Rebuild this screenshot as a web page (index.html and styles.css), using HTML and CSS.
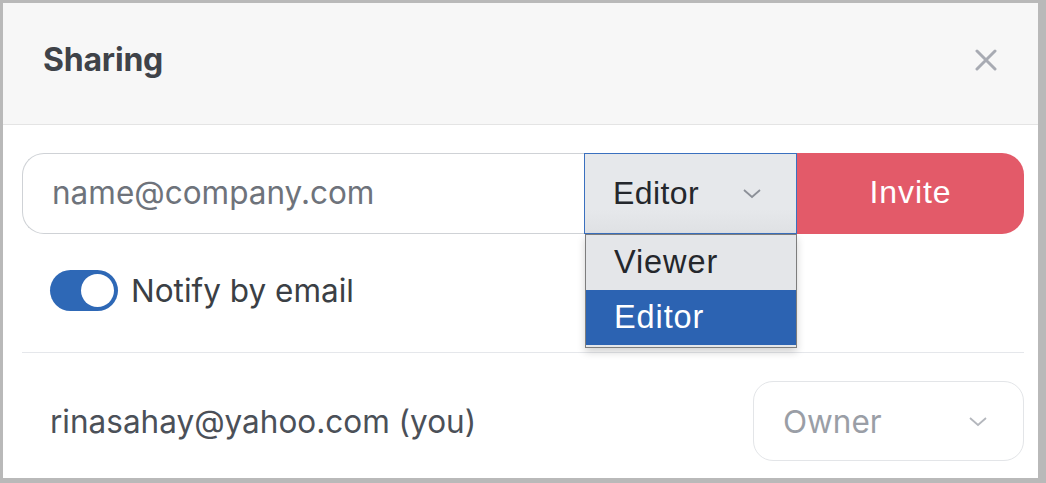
FILE: index.html
```html
<!DOCTYPE html>
<html>
<head>
<meta charset="utf-8">
<link rel="stylesheet" href="styles.css">
</head>
<body>
<div class="panel">
  <header class="header">
    <h1 class="title">Sharing</h1>
    <svg class="close" width="22" height="22" viewBox="0 0 22 22"><path d="M2 2 L20 20 M20 2 L2 20" stroke="#a8abb3" stroke-width="3" stroke-linecap="round" fill="none"/></svg>
  </header>
  <div class="body">
    <div class="invite-row">
      <div class="email-input">name@company.com</div>
      <div class="role-wrap">
        <div class="role-select">
          <span>Editor</span>
          <svg class="chev" width="20" height="11" viewBox="0 0 20 11"><path d="M2 2 L10 9 L18 2" stroke="#8c9098" stroke-width="1.8" fill="none"/></svg>
        </div>
        <ul class="role-list">
          <li class="opt">Viewer</li>
          <li class="opt selected">Editor</li>
        </ul>
      </div>
      <button class="invite-btn">Invite</button>
    </div>
    <div class="notify-row">
      <span class="toggle"><span class="knob"></span></span>
      <span class="notify-label">Notify by email</span>
    </div>
    <div class="divider"></div>
    <div class="member-row">
      <span class="member">rinasahay@yahoo.com (you)</span>
      <div class="owner-select">
        <span>Owner</span>
        <svg class="chev" width="20" height="11" viewBox="0 0 20 11"><path d="M2 2 L10 9 L18 2" stroke="#b4b7bd" stroke-width="1.8" fill="none"/></svg>
      </div>
    </div>
  </div>
</div>
</body>
</html>
```
FILE: styles.css
```css
* { box-sizing: border-box; }
html, body { margin: 0; padding: 0; }
body {
  background: #b9b9b9;
  width: 1046px;
  height: 483px;
  overflow: hidden;
  padding: 3px 8px 5px 3px;
  font-family: Inter, "Noto Sans", sans-serif;
}
.panel {
  background: #fff;
  width: 1035px;
  height: 475px;
  overflow: hidden;
}
.header {
  height: 122px;
  background: #f7f7f7;
  border-bottom: 1px solid #e4e4e4;
  display: flex;
  align-items: center;
  justify-content: space-between;
  padding: 0 41px 8px 40px;
}
.title {
  margin: 0;
  font-size: 32px;
  font-weight: 700;
  color: #3f4349;
  letter-spacing: -0.2px;
}
.close { display: block; }
.body {
  padding: 28px 14px 0 19px;
}
.invite-row {
  display: flex;
  height: 81px;
}
.email-input {
  width: 562px;
  height: 81px;
  border: 1px solid #cfd2d6;
  border-right: none;
  border-radius: 22px 0 0 22px;
  display: flex;
  align-items: center;
  padding: 0 0 2px 29px;
  font-size: 31.5px;
  color: #6e737b;
}
.role-wrap {
  position: relative;
  width: 213px;
}
.role-select {
  height: 81px;
  background: linear-gradient(#e6e8eb 70%, #dfe1e4);
  border: 1px solid #3a70bf;
  display: flex;
  align-items: center;
  justify-content: space-between;
  padding: 0 34px 0 28px;
  font-family: "Liberation Sans", Arial, sans-serif;
  font-size: 32px;
  letter-spacing: 0.4px;
  color: #24272c;
}
.role-list {
  position: absolute;
  top: 81px;
  left: 1px;
  width: 212px;
  margin: 0;
  padding: 0 0 2px;
  list-style: none;
  background: #e4e6e9;
  border: 1px solid #7d7d7d;
  box-shadow: 0 4px 8px rgba(0,0,0,0.18);
  font-family: "Liberation Sans", Arial, sans-serif;
  font-size: 32.5px;
  letter-spacing: 0.9px;
  z-index: 2;
}
.opt {
  height: 55px;
  display: flex;
  align-items: center;
  padding-left: 28px;
  color: #24272c;
}
.opt.selected {
  background: #2c63b2;
  color: #fff;
}
.invite-btn {
  width: 227px;
  height: 81px;
  border: none;
  border-radius: 0 22px 22px 0;
  background: #e35a69;
  color: #fff;
  font-family: "Liberation Sans", Arial, sans-serif;
  font-size: 32px;
  letter-spacing: 0.9px;
  padding: 0 0 2px;
  margin: 0;
}
.notify-row {
  display: flex;
  align-items: center;
  gap: 13px;
  height: 41px;
  margin-top: 36px;
  padding-left: 28px;
}
.toggle {
  width: 68px;
  height: 41px;
  border-radius: 21px;
  background: #2e68b6;
  display: flex;
  align-items: center;
  justify-content: flex-end;
  padding-right: 4px;
}
.knob {
  width: 33px;
  height: 33px;
  border-radius: 50%;
  background: #fff;
}
.notify-label {
  font-size: 31.5px;
  color: #3b3f45;
}
.divider {
  height: 1px;
  background: #e5e7eb;
  margin-top: 41px;
}
.member-row {
  display: flex;
  align-items: center;
  justify-content: space-between;
  margin-top: 28px;
  padding-left: 28px;
}
.member {
  font-size: 31.5px;
  color: #4b5058;
}
.owner-select {
  width: 271px;
  height: 80px;
  border: 1px solid #e3e5e8;
  border-radius: 20px;
  display: flex;
  align-items: center;
  justify-content: space-between;
  padding: 0 35px 0 29px;
  font-size: 31.5px;
  color: #9a9ea6;
}
```
